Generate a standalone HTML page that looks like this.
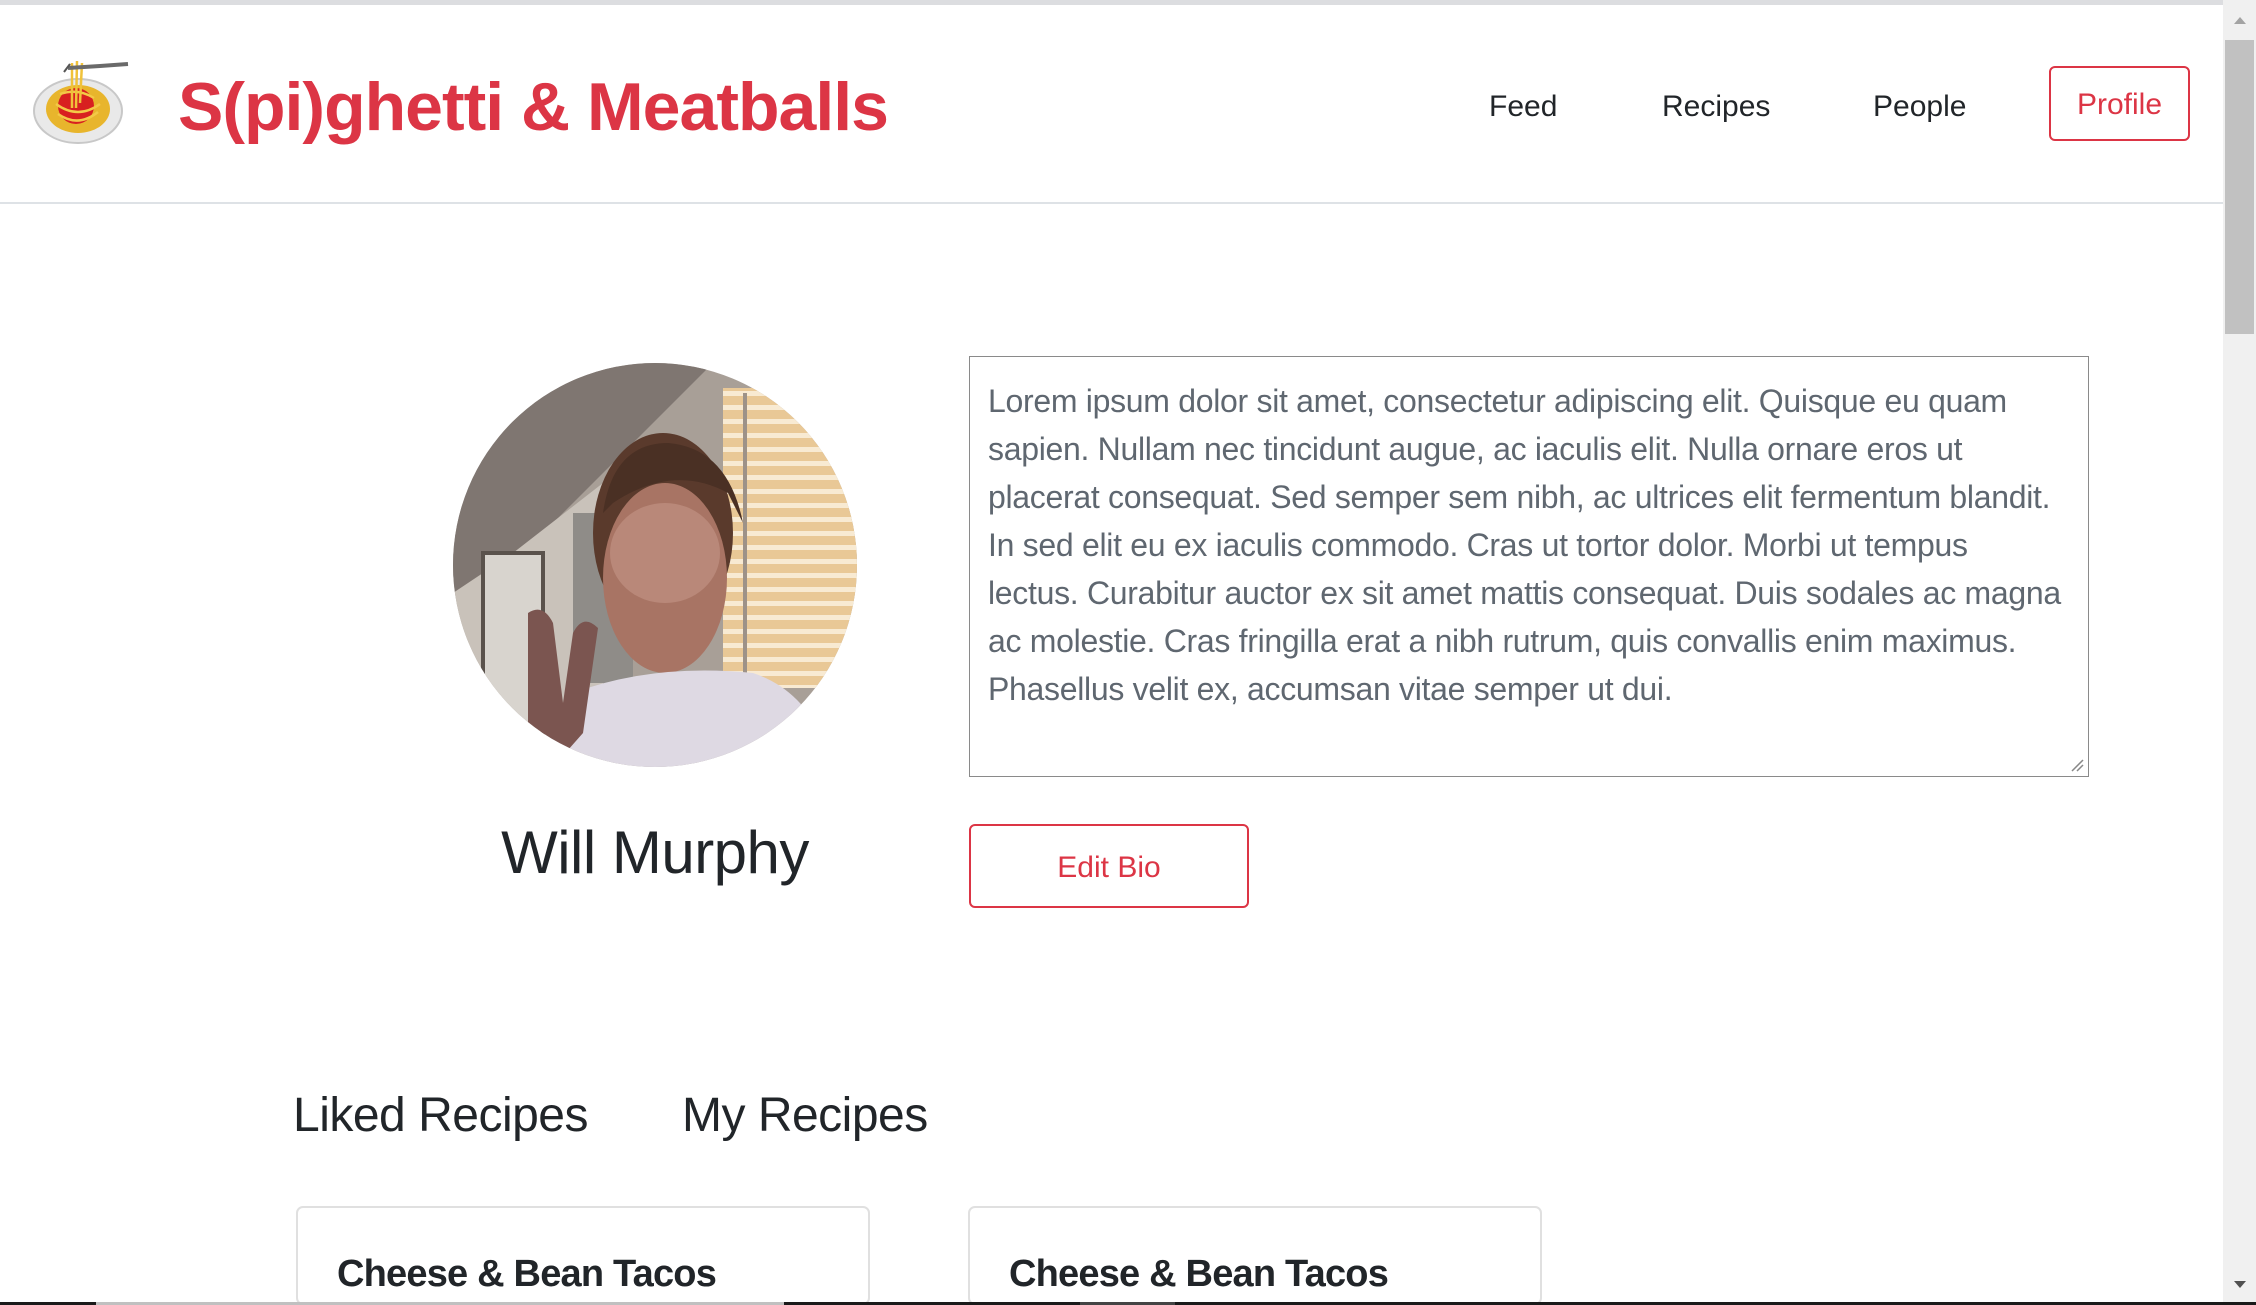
<!DOCTYPE html>
<html><head><meta charset="utf-8">
<style>
html,body{margin:0;padding:0;width:2256px;height:1305px;overflow:hidden;background:#fff;font-family:"Liberation Sans",sans-serif;color:#212529;position:relative}
.abs{position:absolute}
.topline{left:0;top:0;width:2223px;height:5px;background:#dcdde0}
.hdrline{left:0;top:202px;width:2223px;height:2px;background:#dee2e6}
.scroll{left:2223px;top:0;width:33px;height:1305px;background:#f0f0f0}
.thumb{left:2225px;top:40px;width:29px;height:294px;background:#c1c1c1}
.title{left:178px;top:68px;font-size:68px;font-weight:bold;color:#dc3545;letter-spacing:-1px;white-space:nowrap}
.nav{font-size:30px;color:#212529;top:90px;white-space:nowrap}
.profile{left:2049px;top:66px;border:2px solid #dc3545;border-radius:6px;color:#dc3545;font-size:30px;display:flex;align-items:center;justify-content:center;box-sizing:border-box;width:141px;height:75px;padding-top:3px}
.ta{left:969px;top:356px;width:1120px;height:421px;border:1.5px solid #8a8a8a;box-sizing:border-box;padding:20px 0 0 18px;font-size:32px;line-height:48px;color:#5f6770;white-space:nowrap;letter-spacing:-0.3px;overflow:hidden}
.name{left:405px;top:818px;width:500px;text-align:center;font-size:60px;color:#212529;letter-spacing:-0.5px}
.edit{left:969px;top:824px;width:280px;height:84px;border:2px solid #dc3545;border-radius:6px;box-sizing:border-box;color:#dc3545;font-size:30px;display:flex;align-items:center;justify-content:center;padding-top:4px}
.h2{top:1088px;font-size:48px;color:#212529;white-space:nowrap;letter-spacing:-0.5px}
.card{top:1206px;width:574px;height:110px;border:2px solid #e0e0e0;border-radius:7px;box-sizing:border-box}
.ct{top:1253px;font-size:38px;font-weight:bold;color:#212529;white-space:nowrap;letter-spacing:-0.8px}
.bottom{left:0;top:1302px;width:2256px;height:3px;background:#1a1a1a}
</style></head><body>
<div class="abs topline"></div>
<svg class="abs" style="left:30px;top:58px" width="104" height="90" viewBox="0 0 104 90">
 <ellipse cx="48" cy="53" rx="44" ry="32" fill="#e9e9e9" stroke="#c8c8c8" stroke-width="2"/>
 <ellipse cx="48" cy="51" rx="32" ry="24" fill="#e8b52c"/>
 <circle cx="46" cy="48" r="18" fill="#d82020"/>
 <path d="M30 36 Q48 30 64 40 M28 56 Q48 70 68 54 M26 46 Q48 62 70 46" stroke="#f3c947" stroke-width="2.5" fill="none"/>
 <path d="M42 50 L42 5 M46 50 L47 3 M50 45 L52 5" stroke="#f0c23a" stroke-width="2.5"/>
 <path d="M38 10 L70 8 L98 6" stroke="#6a6a6a" stroke-width="4" fill="none"/>
 <path d="M34 14 L40 6" stroke="#555" stroke-width="2"/>
</svg>
<div class="abs title">S(pi)ghetti &amp; Meatballs</div>
<div class="abs nav" style="left:1489px">Feed</div>
<div class="abs nav" style="left:1662px">Recipes</div>
<div class="abs nav" style="left:1873px">People</div>
<div class="abs profile">Profile</div>
<div class="abs hdrline"></div>

<svg class="abs" style="left:453px;top:363px" width="404" height="404" viewBox="0 0 404 404">
 <defs><clipPath id="c"><circle cx="202" cy="202" r="202"/></clipPath>
 <pattern id="bl" width="10" height="14" patternUnits="userSpaceOnUse"><rect width="10" height="14" fill="#e9c896"/><rect width="10" height="5" fill="#f8ead2"/></pattern></defs>
 <g clip-path="url(#c)">
  <rect width="404" height="404" fill="#a89f97"/>
  <polygon points="0,0 260,0 200,60 60,200 0,230" fill="#7f7671"/>
  <polygon points="0,230 60,190 150,120 150,404 0,404" fill="#c9c2ba"/>
  <rect x="30" y="190" width="60" height="200" fill="#d8d4ce" stroke="#5a524c" stroke-width="4"/>
  <rect x="270" y="25" width="134" height="300" fill="url(#bl)"/>
  <rect x="290" y="30" width="4" height="280" fill="#9d9288"/>
  <rect x="120" y="150" width="60" height="170" fill="#8f8c88"/>
  <ellipse cx="210" cy="170" rx="70" ry="100" fill="#5a3a2c"/>
  <ellipse cx="212" cy="215" rx="62" ry="95" fill="#a87464"/>
  <ellipse cx="212" cy="190" rx="55" ry="50" fill="#b98879"/>
  <path d="M150 150 Q160 80 215 80 Q275 85 290 160 L275 130 Q220 100 160 140 Z" fill="#4a3024"/>
  <path d="M90 404 L120 330 Q200 300 300 310 Q360 330 380 404 Z" fill="#ded9e3"/>
  <path d="M75 250 Q90 240 100 260 L110 340 L120 270 Q130 250 145 265 L130 370 L100 404 L75 404 Z" fill="#7b5550"/>
 </g>
</svg>
<div class="abs name">Will Murphy</div>

<div class="abs ta">Lorem ipsum dolor sit amet, consectetur adipiscing elit. Quisque eu quam<br>sapien. Nullam nec tincidunt augue, ac iaculis elit. Nulla ornare eros ut<br>placerat consequat. Sed semper sem nibh, ac ultrices elit fermentum blandit.<br>In sed elit eu ex iaculis commodo. Cras ut tortor dolor. Morbi ut tempus<br>lectus. Curabitur auctor ex sit amet mattis consequat. Duis sodales ac magna<br>ac molestie. Cras fringilla erat a nibh rutrum, quis convallis enim maximus.<br>Phasellus velit ex, accumsan vitae semper ut dui.</div>
<svg class="abs" style="left:2070px;top:758px" width="14" height="14"><path d="M2 13 L13 2 M7 13 L13 7" stroke="#888" stroke-width="1.5"/></svg>
<div class="abs edit">Edit Bio</div>

<div class="abs h2" style="left:293px">Liked Recipes</div>
<div class="abs h2" style="left:682px">My Recipes</div>
<div class="abs card" style="left:296px;height:99px"></div>
<div class="abs card" style="left:968px;height:99px"></div>
<div class="abs ct" style="left:337px">Cheese &amp; Bean Tacos</div>
<div class="abs ct" style="left:1009px">Cheese &amp; Bean Tacos</div>

<div class="abs scroll"></div>
<div class="abs thumb"></div>
<svg class="abs" style="left:2230px;top:14px" width="20" height="14"><path d="M4 10 L10 3 L16 10 Z" fill="#a3a3a3"/></svg>
<svg class="abs" style="left:2230px;top:1278px" width="20" height="14"><path d="M4 3 L10 10 L16 3 Z" fill="#505050"/></svg>
<div class="abs bottom"></div>
<div class="abs" style="left:96px;top:1302px;width:688px;height:3px;background:#c0c0c0"></div>
<div class="abs" style="left:1080px;top:1302px;width:95px;height:3px;background:#444"></div>
</body></html>
